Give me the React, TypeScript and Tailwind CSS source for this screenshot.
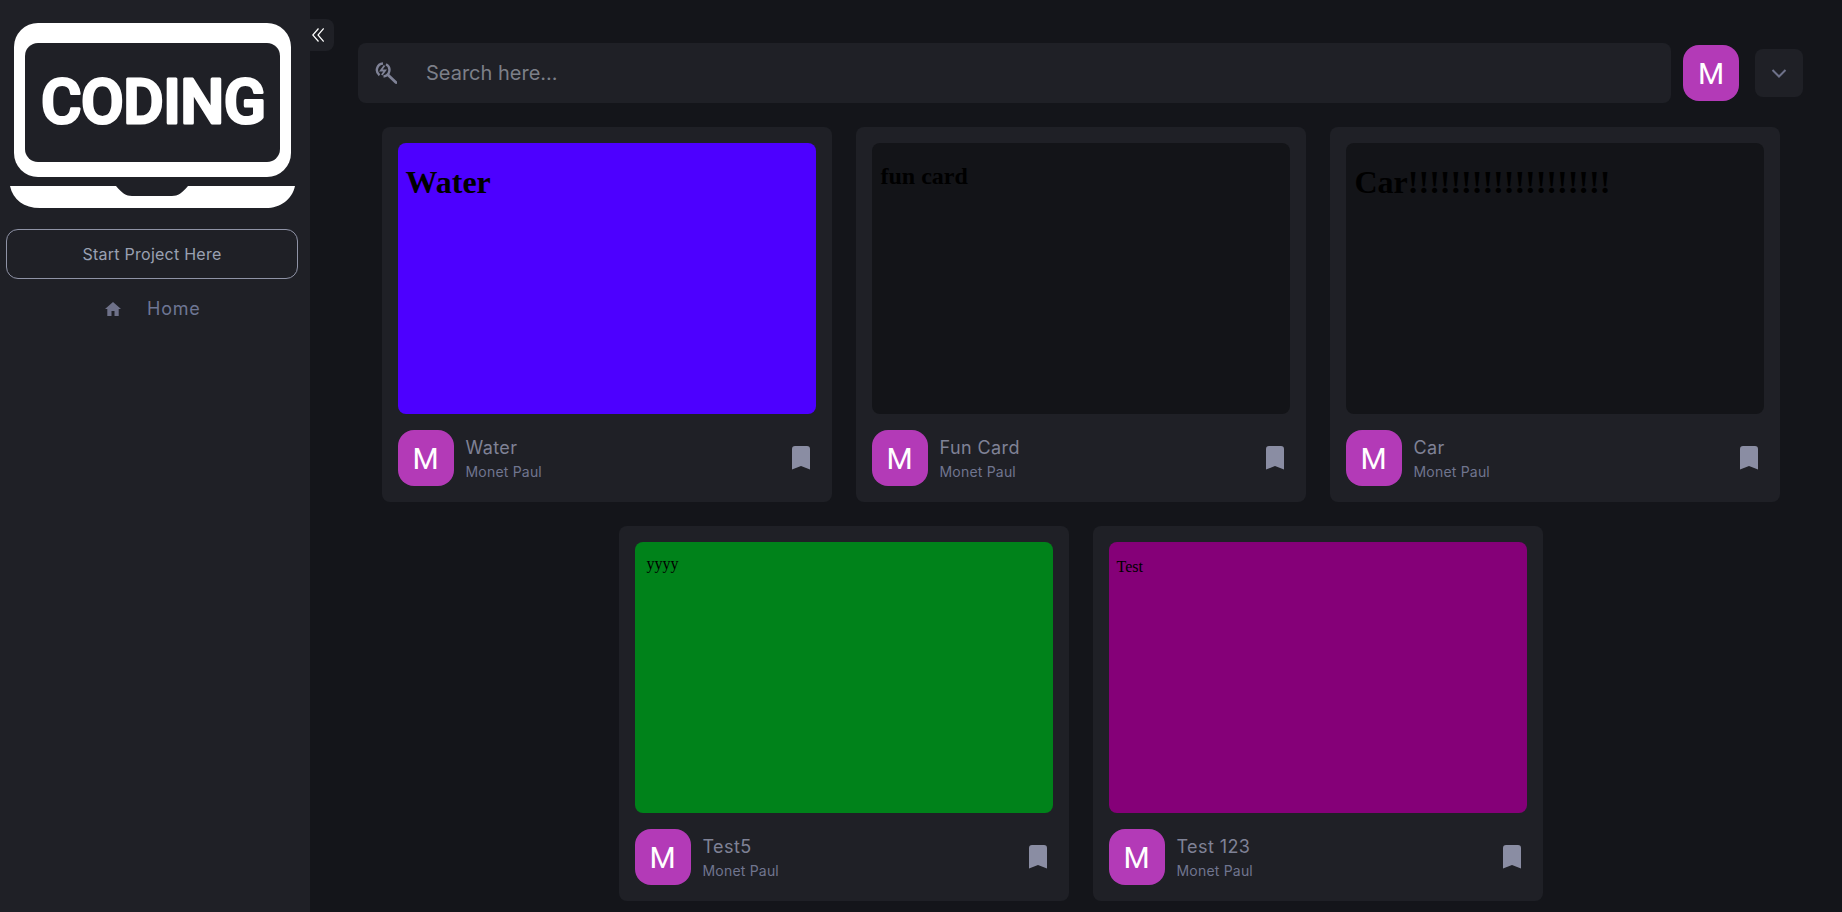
import React from "react";

const cards = [
  { title: "Water", bg: "bg-[#4d00ff]", text: "Water", cls: "text-[32px] font-bold pt-[19px] pl-2" },
  { title: "Fun Card", bg: "bg-[#131418]", text: "fun card", cls: "text-[24px] font-bold pt-[18px] pl-[9px]" },
  { title: "Car", bg: "bg-[#131418]", text: "Car!!!!!!!!!!!!!!!!!!!", cls: "text-[32px] font-bold pt-[19px] pl-[9px]" },
];
const cards2 = [
  { title: "Test5", bg: "bg-[#00821a]", text: "yyyy", cls: "text-[16px] pt-[12px] pl-3" },
  { title: "Test 123", bg: "bg-[#850078]", text: "Test", cls: "text-[16px] pt-[15px] pl-2" },
];

function Avatar() {
  return (
    <div className="flex h-14 w-14 shrink-0 items-center justify-center rounded-2xl bg-[#b33ab7] font-['Roboto',sans-serif] text-[30px] text-white">
      M
    </div>
  );
}

function Card({ c }: { c: { title: string; bg: string; text: string; cls: string } }) {
  return (
    <div className="h-[375px] w-[450px] rounded-lg bg-[#1f2026] p-4">
      <div className={`h-[271px] w-[418px] rounded-lg ${c.bg} ${c.cls} font-['Liberation_Serif',serif] leading-tight text-black`}>
        {c.text}
      </div>
      <div className="mt-4 flex items-center">
        <Avatar />
        <div className="ml-3 flex-1">
          <div className="-mt-px text-[18px] leading-[27px] tracking-[0.4px] text-[#7f8296]">{c.title}</div>
          <div className="text-[14px] leading-[21px] tracking-[0.2px] text-[#70758f]">Monet Paul</div>
        </div>
        <svg width="18" height="24" viewBox="0 0 18 24" className="mr-[6px]">
          <path d="M0 3a3 3 0 0 1 3-3h12a3 3 0 0 1 3 3v20.500l-9-3.500-9 3.500z" fill="#8a8da3" />
        </svg>
      </div>
    </div>
  );
}

function Logo() {
  return (
    <svg width="310" height="215" viewBox="0 0 310 215" className="block">
      <rect x="14" y="23" width="277" height="154" rx="24" fill="#fff" />
      <rect x="25" y="43" width="255" height="119" rx="13" fill="#1f2026" />
      <path
        d="M10 186H116C122 193 126 196 132 196H172C178 196 182 193 188 186H295C292 200 280 208 266 208H40C24 208 13 200 10 186Z"
        fill="#fff"
      />
      <text
        x="41"
        y="122.500"
        fontFamily="'Roboto', sans-serif"
        fontWeight="500"
        fontSize="62"
        textLength="225"
        lengthAdjust="spacing"
        fill="#fff"
        stroke="#fff"
        strokeWidth="3"
        strokeLinejoin="round"
      >
        CODING
      </text>
    </svg>
  );
}

export default function App() {
  return (
    <div className="flex h-[912px] w-full overflow-hidden bg-[#14151a] font-['Inter',sans-serif]">
      <aside className="relative w-[310px] shrink-0 bg-[#1f2026]">
        <Logo />
        <button className="mx-[6px] mt-[14px] flex h-[50px] w-[292px] items-center justify-center rounded-xl border border-[#8f93a6] text-[16px] tracking-[0.25px] text-[#9aa0b2]">
          Start Project Here
        </button>
        <div className="mt-4 flex items-center pl-[105px]">
          <svg width="16" height="14" viewBox="0 0 16 14">
            <path d="M8 0 16 7h-2.300v7H9.500V9h-3v5H2.300V7H0z" fill="#6e7189" />
          </svg>
          <span className="ml-[26px] text-[18px] leading-[27px] tracking-[0.8px] text-[#6e7694]">Home</span>
        </div>
        <button className="absolute left-[310px] top-[19px] flex h-8 w-6 items-center justify-start rounded-r-lg bg-[#1f2026] pl-[2px]">
          <svg width="12" height="14" viewBox="0 0 12 14" fill="none" stroke="#fff" strokeWidth="1.200">
            <path d="M6.500 .5 .8 7l5.700 6.500M11.700 .5 6 7l5.700 6.500" />
          </svg>
        </button>
      </aside>
      <main className="min-w-0 flex-1 pl-12 pr-[39px] pt-[43px]">
        <div className="flex items-center">
          <div className="flex h-[60px] w-[1314px] items-center rounded-lg bg-[#1f2026] pl-[17px]">
            <svg width="22" height="22" viewBox="0 0 22 22" fill="none" stroke="#7f8296" strokeWidth="2.400">
              <path d="M4.500 13.200A6.500 6.500 0 0 1 8 1.500M11 2.300A6.500 6.500 0 0 1 8.500 14.500" />
              <path d="M12.800 12.800 21 20.500" strokeWidth="2.800" strokeLinecap="round" />
              <path d="M9.500 3.500 5.800 8.500h4.400L6.800 13" strokeWidth="1.800" />
            </svg>
            <span className="ml-[29px] text-[20px] text-[#7c7f88]">Search here...</span>
          </div>
          <div className="ml-3">
            <Avatar />
          </div>
          <button className="ml-4 flex h-12 w-12 items-center justify-center rounded-lg bg-[#1f2026]">
            <svg width="16" height="9" viewBox="0 0 16 9" fill="none" stroke="#6e7189" strokeWidth="2">
              <path d="m1.500 1 6.500 6.500L14.500 1" />
            </svg>
          </button>
        </div>
        <div className="mt-6 flex justify-center gap-6">
          {cards.map((c) => (
            <Card key={c.title} c={c} />
          ))}
        </div>
        <div className="mt-6 flex justify-center gap-6">
          {cards2.map((c) => (
            <Card key={c.title} c={c} />
          ))}
        </div>
      </main>
    </div>
  );
}
